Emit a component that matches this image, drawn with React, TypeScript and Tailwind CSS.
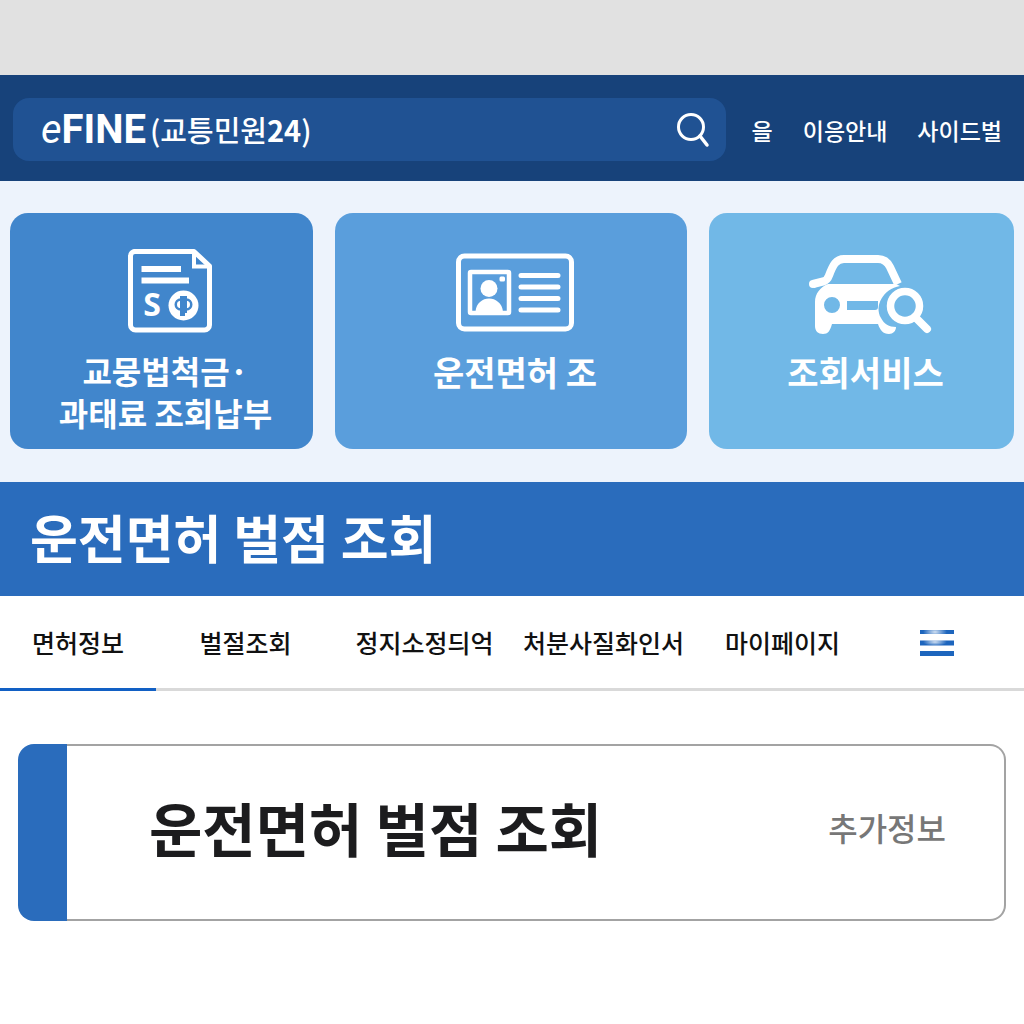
import type { ReactNode } from "react";

interface Service {
  lines: string[];
  color: string;
  text: string;
  icon: ReactNode;
}

function FineIcon() {
  return (
    <svg width="92" height="84" viewBox="-8 0 92 84" fill="none" aria-hidden="true">
      <path
        d="M6 2.500H66L81.500 17V76a5 5 0 0 1-5 5H7.500a5 5 0 0 1-5-5V7a4.500 4.500 0 0 1 4.500-4.500Z"
        stroke="white"
        strokeWidth="5"
        strokeLinejoin="round"
      />
      <path d="M66 2V17.500H82" stroke="white" strokeWidth="4" />
      <path d="M13.500 20H53M13.500 31.500H61" stroke="white" strokeWidth="6" />
      <text
        x="24"
        y="67"
        textAnchor="middle"
        fill="white"
        className="font-['Open_Sans',sans-serif] text-[32px] font-bold"
      >
        S
      </text>
      <circle cx="55.500" cy="56.500" r="15" fill="white" />
      <path
        d="M53 50.500c-7 0-7 10 0 10M58 50.500c7 0 7 10 0 10"
        stroke="#4186cc"
        strokeWidth="2.500"
      />
      <path d="M52 47h7v17h-2v3h-5Z" fill="#4186cc" />
    </svg>
  );
}

function LicenseIcon() {
  return (
    <svg width="118" height="86" viewBox="0 -4 118 86" fill="none" aria-hidden="true">
      <rect x="2.500" y="3" width="113" height="73" rx="6" stroke="white" strokeWidth="5" />
      <rect x="14" y="19" width="39" height="41" rx="1" stroke="white" strokeWidth="4.500" />
      <circle cx="33" cy="35.500" r="8.500" fill="white" />
      <path d="M19.500 59c1-18 26-18 27.500 0Z" fill="white" />
      <rect x="43.500" y="23.500" width="5.500" height="5" rx="1.500" fill="white" />
      <path
        d="M65 22.500h37M65 34h37M65 45.500h37M65 57h37"
        stroke="white"
        strokeWidth="5"
        strokeLinecap="round"
      />
    </svg>
  );
}

function CarSearchIcon() {
  return (
    <svg width="132" height="86" viewBox="-8 -5 132 86" fill="none" aria-hidden="true">
      <path
        d="M5 30l10-2.500c4-1 5-3 6-6C25 11 28 5 36 5H70c7 0 10 4 12 8l8 17"
        stroke="white"
        strokeWidth="8"
      />
      <circle cx="5" cy="30" r="4" fill="white" />
      <path
        fillRule="evenodd"
        clipRule="evenodd"
        d="M22 30H88L92 32C75 35 66 52 73 64c3 6 8 9 15 9 0 4-3 7-7 7-6 0-9-4-11-10H24c-2 7-4 10-9 10-5 0-8-3-8-8V48c0-8 5-15 13-18Zm2 13a8 8 0 1 0 0 16 8 8 0 0 0 0-16Zm15 4v9h28c2 0 3-1 3-3v-6Z"
        fill="white"
      />
      <circle cx="97" cy="52" r="14.500" stroke="white" strokeWidth="7.500" />
      <path d="M107 63l12 12" stroke="white" strokeWidth="8" strokeLinecap="round" />
    </svg>
  );
}

const services: Service[] = [
  {
    lines: ["교뭉법척금·", "과태료 조회납부"],
    color: "bg-[#4186cc]",
    text: "text-[32px] leading-[42px]",
    icon: <FineIcon />,
  },
  {
    lines: ["운전면허 조"],
    color: "bg-[#5a9edc]",
    text: "text-[34px] leading-[46px]",
    icon: <LicenseIcon />,
  },
  {
    lines: ["조회서비스"],
    color: "bg-[#71b8e7]",
    text: "text-[34px] leading-[46px]",
    icon: <CarSearchIcon />,
  },
];

const navLinks = ["을", "이응안내", "사이드벌"];
const tabs = ["면허정보", "벌절조회", "정지소정듸억", "처분사질화인서", "마이페이지"];

export default function App() {
  return (
    <div className="min-h-screen bg-white font-['Noto_Sans_CJK_KR',sans-serif] text-[#111]">
      <div className="h-[75px] bg-[#e1e1e1]" />

      <header className="flex items-center bg-[#17427a] pt-[23px] pr-[22px] pb-5 pl-[13px] text-white">
        <form
          className="flex h-[63px] flex-1 items-center rounded-2xl bg-[#205293] pr-4 pl-7"
          onSubmit={(e) => e.preventDefault()}
        >
          <a href="#" className="flex items-center gap-1 whitespace-nowrap">
            <span className="font-['Roboto',sans-serif] text-[40px] font-bold leading-none">
              <span className="font-normal italic">e</span>FINE
            </span>
            <span className="text-[29px] font-medium leading-none">
              (교틍민원<span className="font-bold">24</span>)
            </span>
          </a>
          <input type="text" aria-label="검색어" className="min-w-0 flex-1 bg-transparent px-4 text-xl outline-none" />
          <button type="submit" aria-label="검색">
            <svg width="34" height="36" viewBox="0 0 34 36" fill="none" aria-hidden="true">
              <circle cx="15" cy="15" r="12.500" stroke="white" strokeWidth="3" />
              <path d="M24 24l7 9" stroke="white" strokeWidth="3.500" strokeLinecap="round" />
            </svg>
          </button>
        </form>
        <nav className="ml-[26px] flex gap-[30px] text-[23px] font-medium leading-8">
          {navLinks.map((label) => (
            <a key={label} href="#" className="whitespace-nowrap">
              {label}
            </a>
          ))}
        </nav>
      </header>

      <section className="grid grid-cols-[303fr_352fr_305fr] gap-[22px] bg-[#edf3fc] px-[10px] pt-8 pb-[33px]">
        {services.map((service) => (
          <a
            key={service.lines[0]}
            href="#"
            className={`flex h-[236px] flex-col items-center rounded-[18px] pt-9 pl-2 text-white ${service.color}`}
          >
            <span className="flex h-[86px] items-start">{service.icon}</span>
            <span className={`mt-[14px] text-center font-bold ${service.text}`}>
              {service.lines.map((line) => (
                <span key={line} className="block whitespace-nowrap">
                  {line}
                </span>
              ))}
            </span>
          </a>
        ))}
      </section>

      <section className="flex h-[114px] items-center bg-[#2a6cbc] px-[30px] pb-1">
        <h1 className="text-[52px] font-bold leading-none text-white">운전면허 벌점 조회</h1>
      </section>

      <nav className="grid h-[95px] grid-cols-[156fr_179fr_179fr_179fr_179fr_152fr]">
        {tabs.map((tab, i) => (
          <a
            key={tab}
            href="#"
            aria-current={i === 0 ? "page" : undefined}
            className={`flex items-center justify-center border-b-[3px] pt-0.5 text-[25px] font-medium whitespace-nowrap ${
              i === 0 ? "border-[#1260c4]" : "border-[#d9d9d9]"
            }`}
          >
            {tab}
          </a>
        ))}
        <div className="flex items-center justify-center border-b-[3px] border-[#d9d9d9] pt-0.5 pr-[22px]">
          <button type="button" aria-label="전체 메뉴">
            <svg width="34" height="28" viewBox="0 0 34 28" aria-hidden="true">
              <defs>
                <radialGradient id="shine">
                  <stop offset="0" stopColor="white" stopOpacity="0.8" />
                  <stop offset="1" stopColor="white" stopOpacity="0" />
                </radialGradient>
              </defs>
              <path d="M0 1h34v4H0ZM0 11.500h34v5H0ZM0 22h34v5H0Z" fill="#1d65bd" />
              <ellipse cx="15" cy="3" rx="12" ry="6" fill="url(#shine)" />
              <ellipse cx="15" cy="13" rx="12" ry="4" fill="url(#shine)" />
            </svg>
          </button>
        </div>
      </nav>

      <main className="px-[18px] pt-[53px]">
        <section className="flex h-[177px] items-stretch">
          <div className="w-[49px] rounded-l-2xl bg-[#2a6cbc]" />
          <div className="flex flex-1 items-center justify-between rounded-r-2xl border-2 border-l-0 border-[#a3a3a3] pr-[58px] pb-3 pl-[82px]">
            <h2 className="text-[58px] font-bold leading-none text-[#1c1c1e]">운전면허 벌점 조회</h2>
            <a href="#" className="text-[32px] font-medium leading-none text-[#777]">
              추가정보
            </a>
          </div>
        </section>
      </main>
    </div>
  );
}
